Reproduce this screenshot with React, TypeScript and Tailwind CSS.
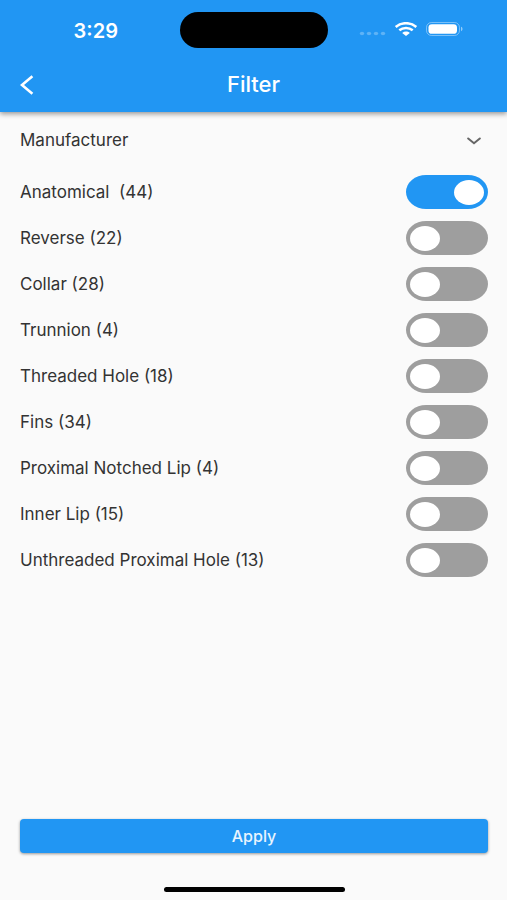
import { useState } from "react";

const initialFilters = [
  { id: "anatomical", label: "Anatomical  (44)", on: true },
  { id: "reverse", label: "Reverse (22)", on: false },
  { id: "collar", label: "Collar (28)", on: false },
  { id: "trunnion", label: "Trunnion (4)", on: false },
  { id: "threaded-hole", label: "Threaded Hole (18)", on: false },
  { id: "fins", label: "Fins (34)", on: false },
  { id: "proximal-notched-lip", label: "Proximal Notched Lip (4)", on: false },
  { id: "inner-lip", label: "Inner Lip (15)", on: false },
  { id: "unthreaded-proximal-hole", label: "Unthreaded Proximal Hole (13)", on: false },
];

function StatusBar() {
  return (
    <div className="grid h-[59px] grid-cols-[1fr_148px_1fr] items-center">
      <div className="pl-3 pt-0.5 text-center text-[20px] font-semibold">3:29</div>
      <div className="h-9 rounded-full bg-black" />
      <div className="flex items-center justify-center gap-2 pb-0.5 pl-6 pr-9">
        <svg className="shrink-0" width="27" height="14" viewBox="0 0 27 14" fill="#fff" fillOpacity="0.28" aria-hidden="true">
          <ellipse cx="3" cy="11.5" rx="2.2" ry="1.8" />
          <ellipse cx="10" cy="11.5" rx="2.2" ry="1.8" />
          <ellipse cx="17" cy="11.5" rx="2.2" ry="1.8" />
          <ellipse cx="24" cy="11.5" rx="2.2" ry="1.8" />
        </svg>
        <svg className="shrink-0" width="24" height="14" viewBox="0 0 24 14" fill="none" stroke="#fff" aria-hidden="true">
          <path d="M1.7 4.9C7.4 0 16.6 0 22.3 4.9" strokeWidth="2.6" />
          <path d="M5.3 8.3C9.1 5.1 14.9 5.1 18.7 8.3" strokeWidth="2.5" />
          <path d="M8.2 10.9C10.4 9.1 13.6 9.1 15.8 10.9L12 14Z" fill="#fff" stroke="none" />
        </svg>
        <svg className="shrink-0" width="37" height="14" viewBox="0 0 37 14" aria-hidden="true">
          <rect x="0.5" y="0.5" width="33" height="13" rx="5" fill="none" stroke="#fff" strokeOpacity="0.4" />
          <rect x="2.5" y="2.2" width="28.5" height="9.6" rx="3.4" fill="#fff" />
          <path d="M35 4.8C37 5.4 37 8.6 35 9.2Z" fill="#fff" fillOpacity="0.5" />
        </svg>
      </div>
    </div>
  );
}

export default function App() {
  const [filters, setFilters] = useState(initialFilters);

  const toggle = (id: string) =>
    setFilters((items) => items.map((f) => (f.id === id ? { ...f, on: !f.on } : f)));

  return (
    <div className="flex min-h-screen flex-col bg-[#fafafa] font-['Inter','Liberation_Sans',sans-serif] text-[#333]">
      <header className="bg-[#2196f3] text-white shadow-[0_2px_5px_rgba(0,0,0,0.4)]">
        <StatusBar />
        <div className="grid h-[53px] grid-cols-[54px_1fr_54px] items-center pb-0.5">
          <button type="button" aria-label="Back" className="flex h-full items-center pl-5">
            <svg width="14" height="20" viewBox="0 0 14 20" fill="none" stroke="#fff" strokeWidth="2.6" aria-hidden="true">
              <path d="M12.4 1.2L2 10L12.4 18.8" strokeLinejoin="miter" />
            </svg>
          </button>
          <h1 className="text-center text-[22px] font-medium">Filter</h1>
        </div>
      </header>

      <main className="flex flex-1 flex-col pl-5 pr-[19px]">
        <button type="button" aria-expanded="false" className="flex h-[57px] items-center justify-between pr-[7px] text-left text-[17px]">
          <span>Manufacturer</span>
          <svg width="14" height="8" viewBox="0 0 14 8" fill="none" stroke="#666" strokeWidth="2" strokeLinecap="round" aria-hidden="true">
            <path d="M1.2 1.5L7 6.2L12.8 1.5" />
          </svg>
        </button>
        <ul>
          {filters.map((f) => (
            <li key={f.id} className="flex h-[46px] items-center justify-between">
              <label htmlFor={f.id} className="whitespace-pre pt-0.5 text-[17px]">
                {f.label}
              </label>
              <input
                id={f.id}
                type="checkbox"
                role="switch"
                checked={f.on}
                onChange={() => toggle(f.id)}
                className="flex h-[34px] w-[82px] cursor-pointer appearance-none items-center rounded-[20px/17px] bg-[#9e9e9e] px-1 before:h-[25px] before:w-[30px] before:rounded-[50%] before:bg-white before:content-[''] checked:justify-end checked:bg-[#2196f3]"
              />
            </li>
          ))}
        </ul>
      </main>

      <footer className="pb-2 pl-5 pr-[19px]">
        <button type="button" className="block h-[34px] w-full rounded bg-[#2196f3] text-base font-medium text-white/90 shadow-[0_1px_3px_rgba(0,0,0,0.4)]">
          Apply
        </button>
        <div className="mx-auto mt-[34px] h-[5px] w-[181px] rounded-full bg-black" />
      </footer>
    </div>
  );
}
